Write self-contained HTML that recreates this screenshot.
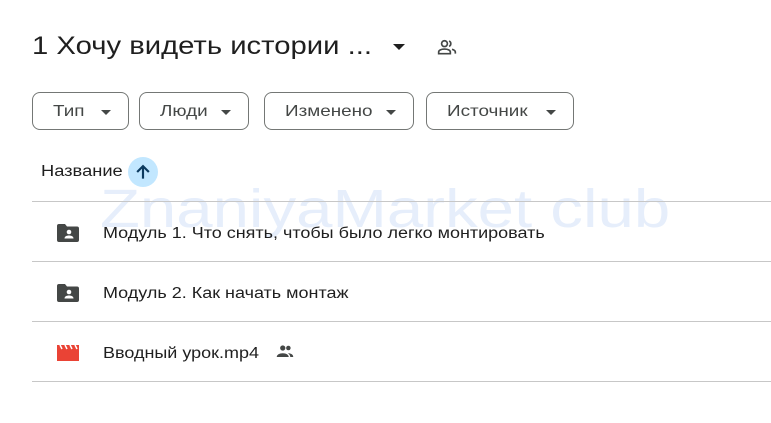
<!DOCTYPE html>
<html><head><meta charset="utf-8"><style>
body{margin:0;width:771px;height:423px;background:#fff;font-family:"Liberation Sans",sans-serif;color:#1f1f1f;position:relative;overflow:hidden}
.a{position:absolute}
.s{display:inline-block;transform-origin:0 50%;white-space:nowrap}
.title{left:32px;top:32px;font-size:25px;white-space:nowrap}
.chip{position:absolute;top:92px;height:38px;border:1px solid #747775;border-radius:8px;box-sizing:border-box;font-size:16px;color:#444746;line-height:38px;padding-left:20px}
.chip .s{transform:scaleX(1.18)}
.chip:after{content:"";position:absolute;right:17px;top:17px;border-left:5px solid transparent;border-right:5px solid transparent;border-top:5px solid #444746}
.line{position:absolute;left:32px;right:0;height:1px;background:#c7c7c7}
.row{position:absolute;left:103px;font-size:15.5px;color:#1f1f1f;white-space:nowrap}
.row .s{transform:scaleX(1.16)}
.wm{left:100px;top:178px;font-size:54px;color:#e6eefb;white-space:nowrap}
</style></head><body>
<div class="a wm"><span class="s" style="transform:scaleX(1.21)">ZnaniyaMarket club</span></div>
<div class="a title"><span class="s" style="transform:scaleX(1.17)">1 Хочу видеть истории ...</span></div>
<div class="a" style="left:393px;top:44px;border-left:6px solid transparent;border-right:6px solid transparent;border-top:6px solid #1f1f1f"></div>
<svg class="a" style="left:437px;top:37px" width="20" height="20" viewBox="0 0 24 24"><g fill="none" stroke="#444746" stroke-width="2"><circle cx="9" cy="8" r="3.5"/><path d="M2 20v-2c0-2 3-3.5 7-3.5s7 1.5 7 3.5v2z"/><path d="M14.5 4.8a3.5 3.5 0 010 6.4M18 14.8c2 .6 4 1.6 4 3.2v2"/></g></svg>
<div class="chip" style="left:32px;width:97px"><span class="s">Тип</span></div>
<div class="chip" style="left:139px;width:110px"><span class="s">Люди</span></div>
<div class="chip" style="left:264px;width:150px"><span class="s">Изменено</span></div>
<div class="chip" style="left:426px;width:148px"><span class="s">Источник</span></div>
<div class="a" style="left:41px;top:163px;font-size:15.5px"><span class="s" style="transform:scaleX(1.18)">Название</span></div>
<div class="a" style="left:128px;top:157px;width:30px;height:30px;border-radius:50%;background:#c2e7ff"></div>
<svg class="a" style="left:133px;top:162px" width="20" height="20" viewBox="0 0 24 24"><path d="M12 20V5M5 12l7-7 7 7" fill="none" stroke="#0b3a5f" stroke-width="2.6"/></svg>
<div class="line" style="top:201px"></div>
<div class="line" style="top:261px"></div>
<div class="line" style="top:321px"></div>
<div class="line" style="top:381px"></div>
<svg class="a" style="left:55px;top:222px" width="26" height="22" viewBox="0 0 26 22"><path d="M2 4a2 2 0 012-2h6l2 2.5h10a2 2 0 012 2V18a2 2 0 01-2 2H4a2 2 0 01-2-2z" fill="#444746"/><circle cx="14" cy="10" r="2.3" fill="#fff"/><path d="M9.5 16.5c0-2 2-3 4.5-3s4.5 1 4.5 3z" fill="#fff"/></svg>
<div class="row" style="top:225px"><span class="s">Модуль 1. Что снять, чтобы было легко монтировать</span></div>
<svg class="a" style="left:55px;top:282px" width="26" height="22" viewBox="0 0 26 22"><path d="M2 4a2 2 0 012-2h6l2 2.5h10a2 2 0 012 2V18a2 2 0 01-2 2H4a2 2 0 01-2-2z" fill="#444746"/><circle cx="14" cy="10" r="2.3" fill="#fff"/><path d="M9.5 16.5c0-2 2-3 4.5-3s4.5 1 4.5 3z" fill="#fff"/></svg>
<div class="row" style="top:285px"><span class="s">Модуль 2. Как начать монтаж</span></div>
<svg class="a" style="left:57px;top:343px" width="22" height="18" viewBox="0 0 22 18"><path d="M0 2h22v16H0z" fill="#ea4335"/><path d="M3 2l2 4M8 2l2 4M13 2l2 4M18 2l2 4" stroke="#fff" stroke-width="1.5"/></svg>
<div class="row" style="top:345px"><span class="s">Вводный урок.mp4</span></div>
<svg class="a" style="left:276px;top:343px" width="18" height="16" viewBox="0 0 24 20"><circle cx="9" cy="6" r="3.5" fill="#444746"/><circle cx="16.5" cy="6" r="3" fill="#444746"/><path d="M1 18c0-3 3.5-5 8-5s8 2 8 5zM16 13c3.5 0 7 1.5 7 5h-4c0-2-1-3.5-3-5z" fill="#444746"/></svg>
</body></html>
